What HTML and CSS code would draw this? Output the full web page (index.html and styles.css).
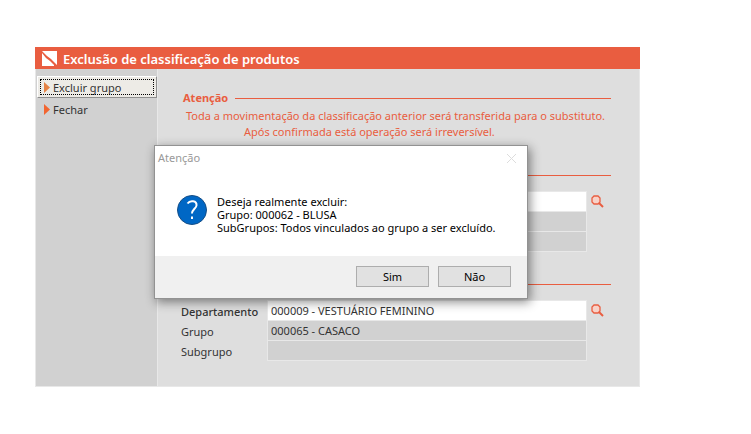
FILE: index.html
```html
<!DOCTYPE html>
<html lang="pt-BR">
<head>
<meta charset="utf-8">
<title>Exclusão de classificação de produtos</title>
<link rel="stylesheet" href="styles.css">
</head>
<body>
<main class="app">
  <header class="titlebar">
    <svg class="logo" viewBox="0 0 15 15" aria-hidden="true"><path d="M0 0H15V14L9 8L5 5Z"/><path d="M0 2L4 7L8 10L12 14V15H0Z"/></svg>
    <h1>Exclusão de classificação de produtos</h1>
  </header>
  <div class="workspace">
    <nav class="sidebar">
      <button class="action action-focused" type="button"><svg viewBox="0 0 6 11" aria-hidden="true"><path d="M0 0L6 5.500L0 11Z"/></svg><span>Excluir grupo</span></button>
      <button class="action" type="button"><svg viewBox="0 0 6 11" aria-hidden="true"><path d="M0 0L6 5.500L0 11Z"/></svg><span>Fechar</span></button>
    </nav>
    <div class="content">
      <section class="group">
        <h2 class="group-title">Atenção</h2>
        <p class="warning">Toda a movimentação da classificação anterior será transferida para o substituto.</p>
        <p class="warning warning-note">Após confirmada está operação será irreversível.</p>
      </section>
      <section class="group" aria-label="Classificação a excluir">
        <div class="group-title"></div>
        <div class="form">
          <input type="text" aria-label="Departamento">
          <button class="search" type="button" aria-label="Pesquisar"><svg viewBox="0 0 13 13" aria-hidden="true"><path class="lens" d="M3 1H7L9 3V7L7 9H3L1 7V3Z"/><path class="handle" d="M8 8L12 12"/></svg></button>
          <input type="text" aria-label="Grupo" readonly>
          <input type="text" aria-label="Subgrupo" readonly>
        </div>
      </section>
      <section class="group" aria-label="Classificação substituta">
        <div class="group-title"></div>
        <div class="form">
          <label class="required" for="dep2">Departamento</label><input id="dep2" type="text" value="000009 - VESTUÁRIO FEMININO">
          <button class="search" type="button" aria-label="Pesquisar"><svg viewBox="0 0 13 13" aria-hidden="true"><path class="lens" d="M3 1H7L9 3V7L7 9H3L1 7V3Z"/><path class="handle" d="M8 8L12 12"/></svg></button>
          <label for="gru2">Grupo</label><input id="gru2" type="text" value="000065 - CASACO" readonly>
          <label for="sub2">Subgrupo</label><input id="sub2" type="text" readonly>
        </div>
      </section>
    </div>
  </div>
  <div class="dialog" role="dialog" aria-labelledby="dialog-title">
    <div class="dialog-head">
      <h2 id="dialog-title">Atenção</h2>
      <button class="close" type="button" aria-label="Fechar"><svg viewBox="0 0 11 11" aria-hidden="true"><path d="M1 1L10 10M10 1L1 10"/></svg></button>
    </div>
    <div class="dialog-body">
      <svg class="question" viewBox="0 0 30 30" aria-hidden="true"><circle cx="15" cy="15" r="14.500"/><path d="M10.500 8.500C13 5 20 5.500 19.500 10.500C19.200 13.500 15 14.500 15 18.500"/><path d="M15 21.500V24"/></svg>
      <p>Deseja realmente excluir:<br>Grupo: 000062 - BLUSA<br>SubGrupos: Todos vinculados ao grupo a ser excluído.</p>
    </div>
    <div class="dialog-foot">
      <button type="button">Sim</button>
      <button type="button">Não</button>
    </div>
  </div>
</main>
</body>
</html>
```
FILE: styles.css
```css
* { box-sizing: border-box; }
body {
  margin: 0;
  padding: 47px 111px 47px 35px;
  background: #fff;
  color: #333;
  font: 11px/16px "Noto Sans", "Open Sans", sans-serif;
}
h1, h2, p { margin: 0; }
button, input { font: inherit; color: inherit; }

.app { position: relative; }
.titlebar {
  display: flex;
  align-items: center;
  gap: 6px;
  height: 22px;
  padding: 1px 7px 0;
  background: #e95d40;
  color: #fff;
}
.titlebar h1 { font-size: 13px; font-weight: 600; line-height: 20px; }
.logo { width: 15px; height: 15px; fill: #fff; }

.workspace {
  display: flex;
  border: 1px solid #e8e8e8;
  border-top: 0;
  background: #dedede;
}
.sidebar {
  flex: 0 0 122px;
  padding: 7px 0 0 1px;
  background: #d1d1d1;
  border-right: 1px solid #e8e8e8;
}
.action {
  display: flex;
  align-items: center;
  gap: 3px;
  width: 120px;
  height: 22px;
  padding: 1px 6px 0;
  border: 1px solid transparent;
  background: none;
}
.action svg { width: 6px; height: 11px; fill: #f26530; }
.action-focused {
  border-color: #fff #8e8e8e #8e8e8e #fff;
  background: #edebe6;
  outline: 1px dotted #000;
  outline-offset: -4px;
}
.action-focused svg { fill: #e58345; }

.content { flex: 1; padding: 21px 28px 26px 23px; }
.group + .group { margin-top: 25px; }
.group-title {
  display: flex;
  align-items: center;
  gap: 7px;
  height: 16px;
  padding-left: 2px;
  color: #e95d40;
  font-size: 11px;
  line-height: 16px;
}
.group-title::after { content: ""; flex: 1; height: 1px; background: #e95d40; }
.warning { padding: 2px 0 0 5px; color: #e95d40; white-space: nowrap; }
.warning-note { padding: 0 0 2px 63px; }
.form {
  display: grid;
  grid-template-columns: 86px 1fr 24px;
  grid-auto-rows: 20px;
  padding-top: 8px;
}
.form label { grid-column: 1; padding-top: 2px; line-height: 20px; }
.form .required { font-weight: 500; }
.form input {
  grid-column: 2;
  min-width: 0;
  height: 21px;
  padding: 0 3px;
  border: 1px solid #e8e8e8;
  border-radius: 0;
  background: #fff;
}
.form input:read-only { background: #d1d1d1; }
.search { display: flex; padding: 4px 0 0 4px; border: 0; background: none; }
.search svg { width: 13px; height: 13px; stroke: #e95d40; }
.lens { fill: #f8d2c8; stroke-width: 1.300; }
.handle { stroke-width: 2; }

.dialog {
  position: absolute;
  top: 98px;
  left: 119px;
  width: 374px;
  border: 1px solid #929292;
  background: #fff;
  color: #000;
  box-shadow: 2px 3px 10px #0007;
}
.dialog-head {
  display: flex;
  justify-content: space-between;
  padding: 4px 10px 0 3px;
  color: #999;
}
.dialog-head h2 { font-size: 11px; font-weight: 400; line-height: 16px; }
.close { display: flex; align-items: center; padding: 0; border: 0; background: none; }
.close svg { width: 11px; height: 11px; stroke: #ddd; fill: none; }
.dialog-body {
  display: flex;
  gap: 10px;
  padding: 29px 22px 22px;
  line-height: 13px;
  white-space: nowrap;
}
.question { width: 30px; height: 30px; fill: #0067c5; stroke: #164e86; }
.question path { fill: none; stroke: #fff; stroke-width: 2; }
.dialog-foot {
  display: flex;
  justify-content: flex-end;
  gap: 9px;
  padding: 10px 16px 11px;
  background: #f0f0f0;
}
.dialog-foot button {
  width: 73px;
  height: 21px;
  padding: 0;
  border: 1px solid #adadad;
  background: #e1e1e1;
  line-height: 19px;
}
```
